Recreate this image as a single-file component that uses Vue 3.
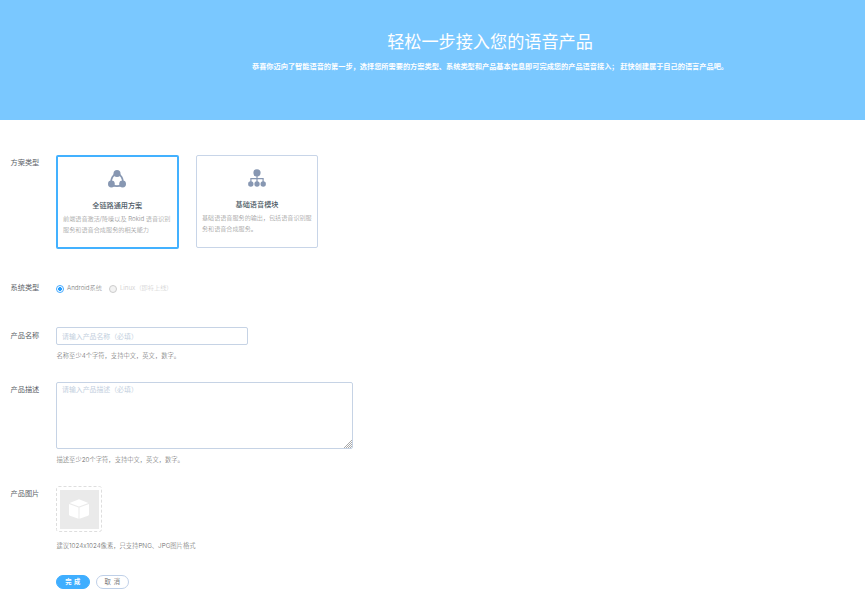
<script setup>
import { ref } from 'vue'

const plan = ref('full')
const system = ref('android')
const name = ref('')
const description = ref('')
</script>

<template>
  <div class="page">
    <header class="banner">
      <h1>轻松一步接入您的语音产品</h1>
      <p>恭喜你迈向了智能语音的第一步，选择您所需要的方案类型、系统类型和产品基本信息即可完成您的产品语音接入； 赶快创建属于自己的语言产品吧。</p>
    </header>

    <form class="form" @submit.prevent>
      <section class="row plan-row">
        <div class="label">方案类型</div>
        <div class="cards">
          <div class="card" :class="{ selected: plan === 'full' }" @click="plan = 'full'">
            <svg class="icon" viewBox="0 0 18 18">
              <path d="M9 3.2 C5 4.5 2.5 9 3.2 13.8 M9 3.2 C13 4.5 15.5 9 14.8 13.8 M3.5 14.4 Q9 18 14.5 14.4" fill="none" stroke="#8797b2" stroke-width="1.8" />
              <g fill="#8797b2"><circle cx="9" cy="3.5" r="3.5" /><circle cx="3.4" cy="14" r="3.4" /><circle cx="14.6" cy="14" r="3.4" /></g>
            </svg>
            <h2>全链路通用方案</h2>
            <p>前端语音激活/降噪以及 Rokid 语音识别<br>服务和语音合成服务的相关能力</p>
          </div>
          <div class="card" :class="{ selected: plan === 'basic' }" @click="plan = 'basic'">
            <svg class="icon" viewBox="0 0 18 18">
              <path d="M9 5V15M2.9 14V9.6H15.1V14" fill="none" stroke="#8797b2" stroke-width="1.2" />
              <g fill="#8797b2"><circle cx="9" cy="3.8" r="3.6" /><ellipse cx="2.8" cy="15" rx="2.7" ry="2.8" /><ellipse cx="9" cy="15" rx="2.7" ry="2.8" /><ellipse cx="15.2" cy="15" rx="2.7" ry="2.8" /></g>
            </svg>
            <h2>基础语音模块</h2>
            <p>基础语语音服务的输出，包括语音识别服<br>务和语音合成服务。</p>
          </div>
        </div>
      </section>

      <section class="row system-row">
        <div class="label">系统类型</div>
        <div class="radios">
          <span class="radio" :class="{ checked: system === 'android' }"><i></i><span>Android系统</span></span>
          <span class="radio disabled"><i></i><span>Linux（即将上线）</span></span>
        </div>
      </section>

      <section class="row name-row">
        <div class="label">产品名称</div>
        <div>
          <input v-model="name" type="text" placeholder="请输入产品名称（必填）">
          <p class="hint">名称至少4个字符，支持中文，英文，数字。</p>
        </div>
      </section>

      <section class="row description-row">
        <div class="label">产品描述</div>
        <div>
          <div class="area">
            <textarea v-model="description" placeholder="请输入产品描述（必填）"></textarea>
            <svg class="grip" viewBox="0 0 8 8"><path d="M0 8L8 0M2 8L8 2M4 8L8 4M6 8L8 6" stroke="#aaa" stroke-width="1" /></svg>
          </div>
          <p class="hint">描述至少20个字符，支持中文，英文，数字。</p>
        </div>
      </section>

      <section class="row image-row">
        <div class="label">产品图片</div>
        <div>
          <div class="upload">
            <svg class="frame" viewBox="0 0 46 46"><rect x=".5" y=".5" width="45" height="45" rx="2" fill="none" stroke="#dedede" stroke-dasharray="3 2" /></svg>
            <div class="picture">
              <svg viewBox="0 0 20 20" fill="#fff"><path d="M10 .2L19.4 3.9L10 7.5L.6 3.9ZM0 5L9.5 8.5V19.8L1 16.8Q0 16.4 0 15.4ZM20 5L10.5 8.5V19.8L19 16.8Q20 16.4 20 15.4Z" /></svg>
            </div>
          </div>
          <p class="hint">建议1024x1024像素，只支持PNG、JPG图片格式</p>
        </div>
      </section>

      <div class="actions">
        <button class="primary" type="submit">完 成</button>
        <button type="button">取 消</button>
      </div>
    </form>
  </div>
</template>

<style>
body { background: #fff; overflow: hidden; }
</style>

<style scoped>
.page { width: 865px; height: 597px; font-family: Inter, "Noto Sans CJK SC", sans-serif; font-size: 7.2px; color: #666; }
.page *, .page { box-sizing: border-box; }
h1, h2, p { margin: 0; }
.banner { height: 119.5px; padding: 29px 0 0 115px; background: #7ac8ff; color: #fff; text-align: center; white-space: nowrap; }
.banner h1 { font-size: 17.15px; line-height: 26px; font-weight: 400; }
.banner p { margin-top: 6px; font-size: 7.2px; line-height: 12px; font-weight: 700; }
.form { padding-top: 35.5px; }
.row { display: grid; grid-template-columns: 56px auto; justify-content: start; align-items: start; }
.label { padding-left: 10.5px; line-height: 12px; color: #5b6167; white-space: nowrap; }
.plan-row { height: 126px; }
.plan-row .label { padding-top: 2px; }
.cards { display: flex; gap: 17.5px; }
.card { width: 122px; height: 93px; border: 1px solid #c8d5e8; border-radius: 2px; padding: 12.5px 5px 0; text-align: center; }
.card.selected { width: 122.5px; height: 94px; border: 2px solid #43b1ff; }
.icon { display: block; width: 18px; height: 18px; margin: 0 auto; }
.card h2 { margin-top: 12.5px; font-size: 7.15px; line-height: 12px; font-weight: 500; color: #4b5964; }
.card p { margin-top: 2px; font-size: 6.1px; line-height: 10.5px; text-align: left; white-space: nowrap; font-weight: 300; color: #888; }
.card.selected p { font-size: 6.15px; }
.system-row { height: 46px; }
.system-row .label { padding-top: 1px; }
.radios { display: flex; gap: 7px; padding-top: 1px; font-size: 6.2px; line-height: 12px; font-weight: 300; color: #777; }
.radio { display: flex; gap: 3px; }
.radio i { width: 8px; height: 8px; margin-top: 3px; border: 1px solid #ccc; border-radius: 50%; background: #f3f3f3; }
.radio.checked i { border-color: #43a9ff; background: radial-gradient(circle, #249dff 0 1.7px, #fff 2.2px); }
.radio.disabled { color: #c8c8c8; }
.name-row { height: 55px; }
.name-row .label { padding-top: 3px; }
input, textarea { display: block; margin: 0; border: 1px solid #c6d3e5; border-radius: 2px; outline: none; background: #fff; font-family: inherit; font-size: 6.9px; color: #555; }
input::placeholder, textarea::placeholder { color: #c3cfde; opacity: 1; }
input { width: 192px; height: 18px; padding: 0 5px; }
.hint { margin-top: 4.5px; padding-left: .5px; font-size: 6.3px; line-height: 12px; font-weight: 300; color: #666; white-space: nowrap; }
.description-row { height: 104px; }
.description-row .label { padding-top: 2px; }
.area { position: relative; width: 296.5px; }
textarea { width: 296.5px; height: 67px; padding: 1px 5px; line-height: 12px; resize: none; }
.grip { position: absolute; right: 1px; bottom: 1px; width: 8px; height: 8px; }
.image-row { height: 88.5px; }
.image-row .label { padding-top: 2px; }
.upload { position: relative; width: 46px; height: 46px; padding: 3.5px; }
.frame { position: absolute; inset: 0; width: 46px; height: 46px; }
.picture { width: 39px; height: 39px; display: grid; place-items: center; background: #eaeaea; }
.picture svg { width: 20px; height: 20px; }
.image-row .hint { margin-top: 8px; }
.actions { display: flex; gap: 6px; padding-left: 56px; }
button { width: 33.5px; height: 14px; padding: 0; border: 1px solid #bfd0e8; border-radius: 7px; background: #fff; color: #777; font-family: inherit; font-size: 6.3px; line-height: 12px; word-spacing: 1px; }
button.primary { border-color: #3faeff; background: #3faeff; color: #fff; font-weight: 700; }
</style>
